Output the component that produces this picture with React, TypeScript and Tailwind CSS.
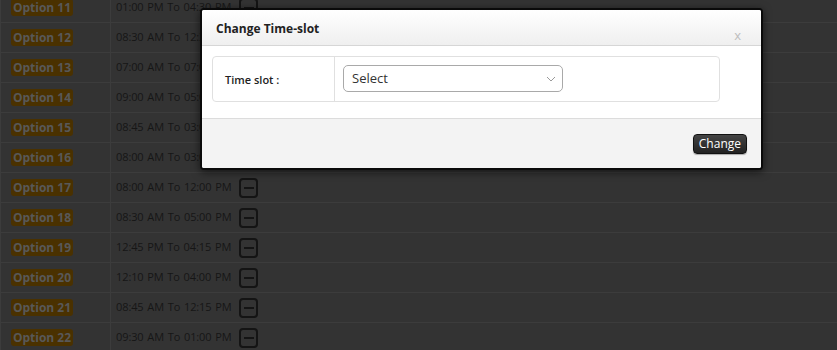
import React from "react";

const rows = [
  { n: 11, t: "01:00 PM To 04:30 PM" },
  { n: 12, t: "08:30 AM To 12:30 PM" },
  { n: 13, t: "07:00 AM To 07:00 PM" },
  { n: 14, t: "09:00 AM To 05:00 PM" },
  { n: 15, t: "08:45 AM To 03:00 PM" },
  { n: 16, t: "08:00 AM To 03:00 PM" },
  { n: 17, t: "08:00 AM To 12:00 PM" },
  { n: 18, t: "08:30 AM To 05:00 PM" },
  { n: 19, t: "12:45 PM To 04:15 PM" },
  { n: 20, t: "12:10 PM To 04:00 PM" },
  { n: 21, t: "08:45 AM To 12:15 PM" },
  { n: 22, t: "09:30 AM To 01:00 PM" },
];

export default function App() {
  return (
    <div
      className="relative w-[837px] h-[350px] overflow-hidden bg-[#333333]"
      style={{ fontFamily: '"Open Sans", "Noto Sans", sans-serif' }}
    >
      <div className="mt-[-7px] flex flex-col">
        {rows.map((r) => (
          <div key={r.n} className="flex h-[30px] border-b border-[#3c3c3c]">
            <div className="w-[111px] shrink-0 border-l border-r border-[#3c3c3c] flex items-center pl-[10px]">
              <span className="h-[17px] w-[62px] rounded-[3px] bg-[#4a3100] text-[#585858] text-[12px] font-bold leading-[17px] text-center">
                Option {r.n}
              </span>
            </div>
            <div className="flex items-center pl-[5px]">
              <span className="text-[11px] text-[#161616] whitespace-nowrap w-[118px] shrink-0 tracking-[-0.1px] [word-spacing:1px]">
                {r.t}
              </span>
              <span className="ml-[5px] w-[19px] h-[20px] shrink-0 rounded-[4px] border-2 border-[#141414] flex items-center justify-center">
                <span className="block w-[10px] h-[2px] bg-[#141414]" />
              </span>
            </div>
          </div>
        ))}
      </div>

      <div className="absolute left-[200px] top-[8px] w-[563px] h-[162px] border-2 border-[#0a0a0a] rounded-[4px] bg-white shadow-[0_2px_8px_rgba(0,0,0,0.6)] flex flex-col overflow-hidden">
        <div className="relative h-[36px] shrink-0 bg-gradient-to-b from-white to-[#efefef] border-b border-[#d6d6d6] flex items-center pl-[14px]">
          <span className="text-[12px] font-bold text-[#222] mt-[2px]">Change Time-slot</span>
          <span className="absolute right-[20px] top-[19px] text-[13px] leading-[12px] text-[#bdbdbd]">x</span>
        </div>
        <div className="h-[73px] shrink-0 bg-white px-[10px] pt-[10px] border-b border-[#dcdcdc]">
          <div className="w-[508px] h-[46px] border border-[#e0e0e0] rounded-[4px] flex">
            <div className="w-[122px] shrink-0 border-r border-[#e0e0e0] pl-[12px] pt-[9px]">
              <span className="text-[11px] font-semibold text-[#222]">Time slot :</span>
            </div>
            <div className="pl-[8px] pt-[8px]">
              <div className="w-[220px] h-[27px] border border-[#a9a9a9] rounded-[5px] flex items-center justify-between pl-[8px] pr-[6px]">
                <span className="text-[13px] text-[#333] mt-[1px]">Select</span>
                <svg width="10" height="6" viewBox="0 0 10 6">
                  <path d="M1 1 L5 5 L9 1" fill="none" stroke="#9a9a9a" strokeWidth="1" />
                </svg>
              </div>
            </div>
          </div>
        </div>
        <div className="flex-1 bg-[#f3f3f3] flex justify-end items-start pt-[15px] pr-[14px]">
          <span className="h-[20px] px-[5px] rounded-[4px] bg-gradient-to-b from-[#444] to-[#222] border border-[#111] text-white text-[12px] leading-[18px] shadow-[0_1px_1px_rgba(0,0,0,0.3)]">
            Change
          </span>
        </div>
      </div>
    </div>
  );
}
